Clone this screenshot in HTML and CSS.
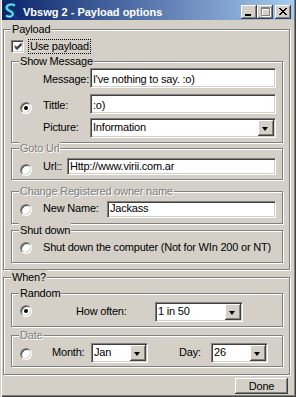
FILE: index.html
```html
<!DOCTYPE html>
<html lang="en">
<head>
  <meta charset="UTF-8" />
  <title>Vbswg 2 - Payload options</title>
  <link rel="stylesheet" href="styles.css">
</head>
<body>
  <div class="window">
    <div class="titlebar">
      <svg class="app-icon" width="15" height="16" viewBox="0 0 15 16">
        <path d="M12 2.5 C7 0 1.5 3 4.5 6.5 C7 8.5 11 8.5 9.5 12 C8 14.5 4.5 13.5 3 12.5" fill="none" stroke="#1f8fb4" stroke-width="3.2"/>
        <path d="M12 2.5 C7 0 1.5 3 4.5 6.5 C7 8.5 11 8.5 9.5 12 C8 14.5 4.5 13.5 3 12.5" fill="none" stroke="#8ff0f4" stroke-width="1.2"/>
        <rect x="10" y="13" width="2" height="1" fill="#3a2aa0"/>
        <rect x="12" y="14" width="2" height="1" fill="#5a3ac0"/>
        <rect x="9" y="15" width="2" height="1" fill="#2a1a80"/>
      </svg>
      <span class="caption">Vbswg 2 - Payload options</span>
      <div class="caption-buttons">
        <span class="cbtn"><svg width="16" height="14"><rect x="4" y="9" width="6" height="2" fill="#000"/></svg></span>
        <span class="cbtn"><svg width="16" height="14">
          <path d="M5.5 3.5h8v8h-8z M5.5 4.5h8" fill="none" stroke="#fff"/>
          <path d="M4.5 2.5h8v8h-8z M4.5 3.5h8" fill="none" stroke="#808080"/>
        </svg></span>
        <span class="cbtn close"><svg width="16" height="14"><path d="M4 3 L11 10 M5 3 L12 10 M11 3 L4 10 M12 3 L5 10" stroke="#000" stroke-width="1"/></svg></span>
      </div>
    </div>

    <div class="client">
      <div class="group payload">
        <span class="legend">Payload</span>
        <div class="check-row">
          <span class="checkbox"><svg width="9" height="9"><path d="M1 3.5 L3 5.5 L7.5 1 M1 4.5 L3 6.5 L7.5 2 M1 5.5 L3 7.5 L7.5 3" fill="none" stroke="#000"/></svg></span>
          <span class="focus">Use payload</span>
        </div>

        <div class="group sub msg-group">
          <span class="legend">Show Message</span>
          <div class="row">
            <span class="slot"></span>
            <span class="lbl w-msg">Message:</span>
            <div class="edit tall w-186">I've nothing to say. :o)</div>
          </div>
          <div class="row row-title">
            <span class="slot"><span class="radio on r-title"></span></span>
            <span class="lbl w-msg">Tittle:</span>
            <div class="edit tall w-186">:o)</div>
          </div>
          <div class="row row-picture">
            <span class="slot"></span>
            <span class="lbl w-msg">Picture:</span>
            <div class="combo w-186"><span class="combo-text">Information</span><span class="drop"></span></div>
          </div>
        </div>

        <div class="group sub url-group">
          <span class="legend off">Goto Url</span>
          <div class="row">
            <span class="slot"><span class="radio r-url"></span></span>
            <span class="lbl w-url">Url::</span>
            <div class="edit short pt1 w-209">Http://www.virii.com.ar</div>
          </div>
        </div>

        <div class="group sub owner-group">
          <span class="legend off">Change Registered owner name</span>
          <div class="row">
            <span class="slot"><span class="radio r-owner"></span></span>
            <span class="lbl w-owner">New Name:</span>
            <div class="edit short w-169">Jackass</div>
          </div>
        </div>

        <div class="group sub shut-group">
          <span class="legend">Shut down</span>
          <div class="row">
            <span class="slot"><span class="radio r-shut"></span></span>
            <span class="lbl">Shut down the computer (Not for WIn 200 or NT)</span>
          </div>
        </div>
      </div>

      <div class="group when">
        <span class="legend">When?</span>

        <div class="group sub random-group">
          <span class="legend">Random</span>
          <div class="row">
            <span class="slot"><span class="radio on r-random"></span></span>
            <span class="lbl w-often">How often:</span>
            <div class="combo w-88"><span class="combo-text">1 in 50</span><span class="drop"></span></div>
          </div>
        </div>

        <div class="group sub date-group">
          <span class="legend off">Date</span>
          <div class="row">
            <span class="slot"><span class="radio r-date"></span></span>
            <span class="lbl w-month">Month:</span>
            <div class="combo w-57"><span class="combo-text">Jan</span><span class="drop"></span></div>
            <span class="lbl w-day">Day:</span>
            <div class="combo w-57"><span class="combo-text">26</span><span class="drop"></span></div>
          </div>
        </div>
      </div>

      <div class="footer">
        <button class="btn">Done</button>
      </div>
    </div>
  </div>
</body>
</html>
```

FILE: styles.css
```css
body {
  margin: 0;
  font-family: "Liberation Sans", Arial, sans-serif;
  font-size: 11px;
  letter-spacing: -0.2px;
  color: #000;
  background: #d4d0c8;
}

.window {
  width: 296px;
  height: 397px;
  box-sizing: border-box;
  padding: 0 2px 2px 2px;
  background: #d4d0c8;
  box-shadow: inset 1px 0 #d4d0c8, inset 2px 0 #fff, inset -1px -1px #404040, inset -2px -2px #808080;
  display: flex;
  flex-direction: column;
}

/* title bar */
.titlebar {
  height: 20px;
  flex: none;
  display: flex;
  align-items: flex-start;
  background: linear-gradient(to right, #0a246a, #a6caf0);
  color: #fff;
  font-weight: bold;
  letter-spacing: 0;
}

.app-icon {
  margin: 3px 0 0 1px;
  flex: none;
}

.caption {
  margin: 6px 0 0 5px;
  line-height: 13px;
  white-space: nowrap;
}

.caption-buttons {
  margin: 5px 3px 0 auto;
  display: flex;
}

.cbtn {
  width: 16px;
  height: 14px;
  background: #d4d0c8;
  box-shadow: inset -1px -1px #404040, inset 1px 1px #fff, inset -2px -2px #808080;
}

.cbtn svg { display: block; }

.cbtn.close { margin-left: 2px; }

/* group boxes */
.group {
  position: relative;
  border: 1px solid #808080;
  box-shadow: inset 1px 1px #fff, 1px 1px #fff;
}

.legend {
  position: absolute;
  top: -8px;
  left: 7px;
  padding: 0 1px;
  line-height: 14px;
  background: #d4d0c8;
  white-space: nowrap;
}

.off, .legend.off {
  color: #808080;
  text-shadow: 1px 1px #fff;
}

.payload {
  margin: 9px 4px 0 1px;
  padding-bottom: 6px;
}

.sub {
  margin-left: 7px;
  margin-right: 6px;
}

.msg-group { margin-top: 7px; padding: 6px 0 4px; }
.url-group { margin-top: 5px; padding: 9px 0 3px; }
.owner-group { margin-top: 11px; padding: 9px 0 5px; }
.shut-group { margin-top: 6px; padding: 10px 0 8px; }

.when {
  margin: 7px 4px 0 1px;
  padding-bottom: 7px;
}

.random-group { margin-top: 15px; padding: 8px 0 4px; }
.date-group { margin-top: 8px; padding: 7px 0 3px; }

/* check box row */
.check-row {
  display: flex;
  align-items: center;
  height: 15px;
  margin: 9px 0 0 7px;
}

.checkbox {
  width: 13px;
  height: 13px;
  box-sizing: border-box;
  background: #fff;
  border: 1px solid;
  border-color: #808080 #fff #fff #808080;
  box-shadow: inset 1px 1px #404040, inset -1px -1px #d4d0c8;
  padding: 1px 0 0 1px;
}

.checkbox svg { display: block; margin: 0 0 0 1px; }

.focus {
  margin-left: 4px;
  border: 1px dotted #000;
  padding: 0 1px;
  line-height: 13px;
}

/* rows */
.row {
  display: flex;
  align-items: baseline;
}

.row-title { margin-top: 6px; }
.row-picture { margin-top: 4px; }

.slot {
  width: 31px;
  flex: none;
  align-self: flex-start;
}

.lbl {
  flex: none;
  line-height: 13px;
  white-space: nowrap;
}

.w-msg { width: 47px; }
.w-url { width: 24px; }
.w-owner { width: 64px; }
.w-often { width: 79px; margin-left: 33px; }
.w-month { width: 39px; margin-left: 9px; }
.w-day { width: 32px; margin-left: 31px; }

.w-186 { width: 186px; }
.w-209 { width: 209px; }
.w-169 { width: 169px; }
.w-88 { width: 88px; }
.w-57 { width: 57px; }

/* radio buttons */
.radio {
  display: block;
  position: relative;
  width: 12px;
  height: 12px;
  box-sizing: border-box;
  margin-left: 8px;
  border-radius: 50%;
  background: #fff;
  border: 1px solid;
  border-color: #808080 #fff #fff #808080;
  box-shadow: inset 1px 1px #404040, inset -1px -1px #d4d0c8;
}

.radio.on::after {
  content: "";
  position: absolute;
  left: 3px;
  top: 3px;
  width: 4px;
  height: 4px;
  border-radius: 50%;
  background: #000;
}

.r-title { margin-top: 8px; }
.r-url { margin-top: 6px; }
.r-owner { margin-top: 3px; }
.r-shut { margin-top: 1px; }
.r-random { margin-top: 3px; }
.r-date { margin-top: 5px; }

/* text fields */
.edit {
  flex: none;
  box-sizing: border-box;
  background: #fff;
  border: 1px solid;
  border-color: #808080 #fff #fff #808080;
  box-shadow: inset 1px 1px #404040, inset -1px -1px #d4d0c8;
  padding: 0 2px;
  line-height: 13px;
  white-space: nowrap;
  overflow: hidden;
}

.edit.tall { height: 20px; padding-top: 4px; }
.edit.short { height: 17px; }
.edit.pt1 { padding-top: 1px; }

.combo {
  flex: none;
  display: flex;
  height: 20px;
  box-sizing: border-box;
  padding: 1px;
  background: #fff;
  border: 1px solid;
  border-color: #808080 #fff #fff #808080;
  box-shadow: inset 1px 1px #404040, inset -1px -1px #d4d0c8;
}

.combo-text {
  flex: 1;
  padding: 1px 0 0 1px;
  line-height: 13px;
  white-space: nowrap;
  overflow: hidden;
}

.drop {
  position: relative;
  width: 16px;
  height: 16px;
  flex: none;
  background: #d4d0c8;
  box-shadow: inset -1px -1px #404040, inset 1px 1px #fff, inset -2px -2px #808080;
}

.drop::after {
  content: "";
  position: absolute;
  left: 4px;
  top: 7px;
  border-left: 3.5px solid transparent;
  border-right: 3.5px solid transparent;
  border-top: 4px solid #000;
}

/* bottom button */
.footer {
  display: flex;
  justify-content: flex-end;
  margin-top: 3px;
  padding-right: 6px;
}

.btn {
  width: 53px;
  height: 16px;
  padding: 0;
  border: none;
  background: #d4d0c8;
  box-shadow: inset -1px -1px #404040, inset 1px 1px #fff, inset -2px -2px #808080;
  font-family: "Liberation Sans", Arial, sans-serif;
  font-size: 11px;
  letter-spacing: -0.2px;
  line-height: 14px;
  color: #000;
}
```
